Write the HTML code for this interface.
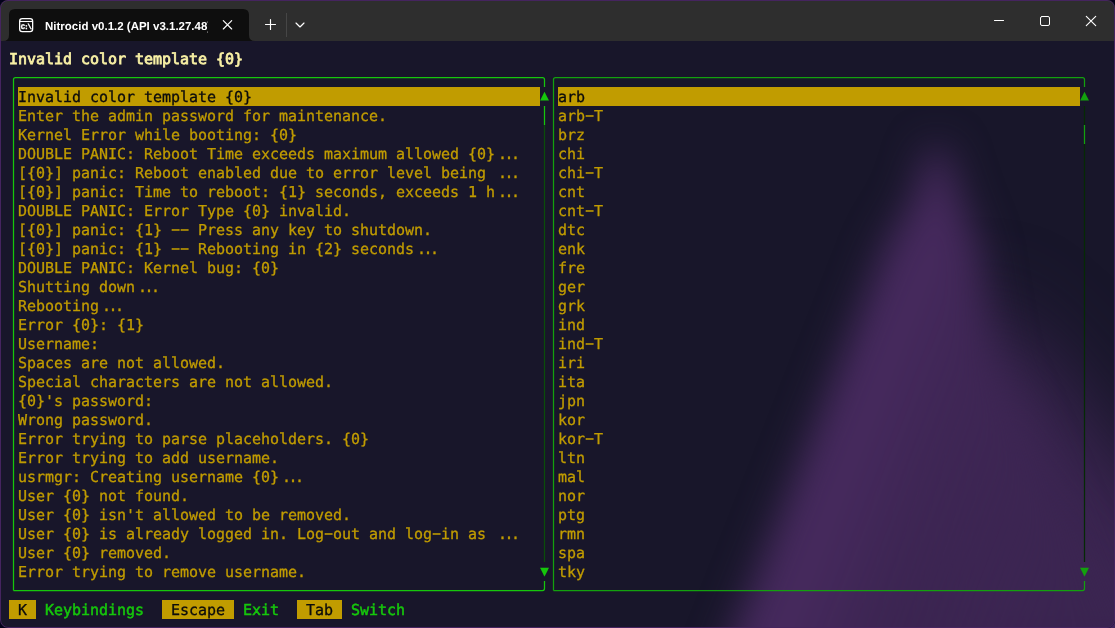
<!DOCTYPE html>
<html lang="en">
<head>
<meta charset="utf-8">
<title>Nitrocid v0.1.2 (API v3.1.27.48)</title>
<style>
html,body{margin:0;padding:0;background:#03011a;}
body{background:radial-gradient(circle at 100% 100%,#43285f 0,#43285f 24px,#03011a 25px);}
body{width:1115px;height:628px;overflow:hidden;position:relative;font-family:"DejaVu Sans Mono","Liberation Mono",monospace;letter-spacing:-0.03px;text-rendering:geometricPrecision;}
#win{position:absolute;left:0;top:0;width:1115px;height:628px;overflow:hidden;border-radius:8px;background:#18162a;}
#bg{position:absolute;left:0;top:40px;width:1115px;height:588px;}
#titlebar{position:absolute;left:0;top:0;width:1115px;height:41px;background:#2e2e2e;}
#tabtitle{will-change:transform;position:absolute;left:45px;top:19px;width:163.2px;height:16px;overflow:hidden;white-space:nowrap;font:bold 11.5px/16px "Liberation Sans",sans-serif;color:#fff;letter-spacing:0;text-rendering:geometricPrecision;}
#frame{position:absolute;left:0;top:0;width:1113px;height:626px;border:1px solid #45245f;border-radius:8px;pointer-events:none;}
.row{position:absolute;height:19px;line-height:21px;font-size:15px;white-space:pre;color:#c19c00;overflow:hidden;-webkit-text-stroke:0.3px currentColor;}
.el{letter-spacing:-2.53px;margin-left:3px;}
.hy{display:inline-block;transform:translateY(-1px) scaleX(1.9);}
.ar{position:absolute;width:10px;height:19px;font-size:15px;overflow:hidden;white-space:pre;}
.sel{background:#c19c00;color:#0c0c0c;}
.t{position:absolute;height:19px;line-height:21px;font-size:15px;white-space:pre;overflow:hidden;-webkit-text-stroke:0.3px currentColor;}
</style>
</head>
<body>
<div id="win">
<svg id="bg" width="1115" height="588" viewBox="0 40 1115 588" style="position:absolute;left:0;top:40px">
<defs>
<filter id="bl" color-interpolation-filters="sRGB" x="-50%" y="-50%" width="200%" height="200%"><feGaussianBlur stdDeviation="19"/></filter>
<filter id="bl2" color-interpolation-filters="sRGB" x="-50%" y="-50%" width="200%" height="200%"><feGaussianBlur stdDeviation="42"/></filter>
<linearGradient id="bg1" gradientUnits="userSpaceOnUse" x1="840" y1="360" x2="1120" y2="469">
<stop offset="0" stop-color="#472a5f"/><stop offset="0.2" stop-color="#45295c"/><stop offset="0.6" stop-color="#3e2654" stop-opacity="0.8"/><stop offset="1" stop-color="#3b2551" stop-opacity="0.5"/>
</linearGradient>
</defs>
<rect x="0" y="40" width="1115" height="588" fill="#18162a"/>
<polygon points="975,300 1055,370 1120,460 1400,700 900,700 930,420" fill="#3b2551" filter="url(#bl2)"/>
<polygon points="930,146 913,200 886,245 707,700 1150,700 1045,460 1000,360 987,290 980,245 961,200 944,146" fill="url(#bg1)" filter="url(#bl)"/>
</svg>
<div id="titlebar">
<svg width="1115" height="41" style="position:absolute;left:0;top:0;will-change:transform" fill="none">
<path fill="#0e0e0e" d="M1 41 H3 Q9 41 9 35 V15 Q9 9 15 9 H243 Q249 9 249 15 V35 Q249 41 255 41 Z"/>
<g stroke="#fff" stroke-width="1.3">
<rect x="19.65" y="18.55" width="13" height="13.1" rx="2.6"/>
<path d="M19.6 21.5 H32.6" stroke-width="1.1"/>
</g>
<g stroke="#fff" stroke-width="1.15" stroke-linecap="round">
<path d="M223.3 20.6 L231.7 29 M231.7 20.6 L223.3 29"/>
<path d="M265.5 24.5 H275.5 M270.5 19.5 V29.5"/>
<path d="M296 23 L300 27 L304 23" stroke-linejoin="round"/>
<path d="M994.5 20.5 H1003.5"/>
<rect x="1040.5" y="16.5" width="9" height="9" rx="1.5" stroke-width="1"/>
<path d="M1086.3 16.3 L1095.7 25.7 M1095.7 16.3 L1086.3 25.7"/>
</g>
<path stroke="#464646" stroke-width="1" d="M286.5 13 V37"/>
<text x="20.8 24.3 27.5" y="29" fill="#fff" stroke="#fff" stroke-width="0.35" font-family="Liberation Mono, monospace" font-weight="bold" font-size="7.2px" style="text-rendering:geometricPrecision">C:\</text>
</svg>
<div id="tabtitle">Nitrocid v0.1.2 (API v3.1.27.48)</div>
</div>
<div id="txt" style="position:absolute;left:0;top:0;width:1115px;height:628px;will-change:transform">
<div class="t" style="left:9px;top:49px;color:#f9f1a5;-webkit-text-stroke:0.75px #f9f1a5">Invalid color template {0}</div>
<svg id="boxes" width="1115" height="628" style="position:absolute;left:0;top:0" fill="none" stroke-width="1.25">
<path stroke="#16c60c" d="M13.5 590.5 V79.5 Q13.5 77.5 15.5 77.5 H542.5 Q544.5 77.5 544.5 79.5 V87 M544.5 106 V125 M544.5 581 V588.5 Q544.5 590.5 542.5 590.5 H13.5"/>
<path stroke="#0a4d0a" d="M544.5 125 V562"/>
<path stroke="#13a10e" d="M553.5 590.5 V79.5 Q553.5 77.5 555.5 77.5 H1082.5 Q1084.5 77.5 1084.5 79.5 V87 M1084.5 125 V144 M1084.5 581 V588.5 Q1084.5 590.5 1082.5 590.5 H553.5"/>
<path stroke="#052a05" d="M1084.5 106 V125 M1084.5 144 V562"/>
</svg>
<div class="ar" style="left:540px;top:87px;color:#16c60c;line-height:17px">▲</div>
<div class="ar" style="left:540px;top:562px;color:#16c60c;line-height:18px">▼</div>
<div class="ar" style="left:1080px;top:87px;color:#13a10e;line-height:17px">▲</div>
<div class="ar" style="left:1080px;top:562px;color:#13a10e;line-height:18px">▼</div>
<div class="row sel" style="left:18px;top:87px;width:522px">Invalid color template {0}</div>
<div class="row" style="left:18px;top:106px;width:522px">Enter the admin password for maintenance.</div>
<div class="row" style="left:18px;top:125px;width:522px">Kernel Error while booting: {0}</div>
<div class="row" style="left:18px;top:144px;width:522px">DOUBLE PANIC: Reboot Time exceeds maximum allowed {0}<span class="el">...</span></div>
<div class="row" style="left:18px;top:163px;width:522px">[{0}] panic: Reboot enabled due to error level being <span class="el">...</span></div>
<div class="row" style="left:18px;top:182px;width:522px">[{0}] panic: Time to reboot: {1} seconds, exceeds 1 h<span class="el">...</span></div>
<div class="row" style="left:18px;top:201px;width:522px">DOUBLE PANIC: Error Type {0} invalid.</div>
<div class="row" style="left:18px;top:220px;width:522px">[{0}] panic: {1} <span class="hy">-</span><span class="hy">-</span> Press any key to shutdown.</div>
<div class="row" style="left:18px;top:239px;width:522px">[{0}] panic: {1} <span class="hy">-</span><span class="hy">-</span> Rebooting in {2} seconds<span class="el">...</span></div>
<div class="row" style="left:18px;top:258px;width:522px">DOUBLE PANIC: Kernel bug: {0}</div>
<div class="row" style="left:18px;top:277px;width:522px">Shutting down<span class="el">...</span></div>
<div class="row" style="left:18px;top:296px;width:522px">Rebooting<span class="el">...</span></div>
<div class="row" style="left:18px;top:315px;width:522px">Error {0}: {1}</div>
<div class="row" style="left:18px;top:334px;width:522px">Username:</div>
<div class="row" style="left:18px;top:353px;width:522px">Spaces are not allowed.</div>
<div class="row" style="left:18px;top:372px;width:522px">Special characters are not allowed.</div>
<div class="row" style="left:18px;top:391px;width:522px">{0}'s password:</div>
<div class="row" style="left:18px;top:410px;width:522px">Wrong password.</div>
<div class="row" style="left:18px;top:429px;width:522px">Error trying to parse placeholders. {0}</div>
<div class="row" style="left:18px;top:448px;width:522px">Error trying to add username.</div>
<div class="row" style="left:18px;top:467px;width:522px">usrmgr: Creating username {0}<span class="el">...</span></div>
<div class="row" style="left:18px;top:486px;width:522px">User {0} not found.</div>
<div class="row" style="left:18px;top:505px;width:522px">User {0} isn't allowed to be removed.</div>
<div class="row" style="left:18px;top:524px;width:522px">User {0} is already logged in. Log<span class="hy">-</span>out and log<span class="hy">-</span>in as <span class="el">...</span></div>
<div class="row" style="left:18px;top:543px;width:522px">User {0} removed.</div>
<div class="row" style="left:18px;top:562px;width:522px">Error trying to remove username.</div>
<div class="row sel" style="left:558px;top:87px;width:522px">arb</div>
<div class="row" style="left:558px;top:106px;width:522px">arb<span class="hy">-</span>T</div>
<div class="row" style="left:558px;top:125px;width:522px">brz</div>
<div class="row" style="left:558px;top:144px;width:522px">chi</div>
<div class="row" style="left:558px;top:163px;width:522px">chi<span class="hy">-</span>T</div>
<div class="row" style="left:558px;top:182px;width:522px">cnt</div>
<div class="row" style="left:558px;top:201px;width:522px">cnt<span class="hy">-</span>T</div>
<div class="row" style="left:558px;top:220px;width:522px">dtc</div>
<div class="row" style="left:558px;top:239px;width:522px">enk</div>
<div class="row" style="left:558px;top:258px;width:522px">fre</div>
<div class="row" style="left:558px;top:277px;width:522px">ger</div>
<div class="row" style="left:558px;top:296px;width:522px">grk</div>
<div class="row" style="left:558px;top:315px;width:522px">ind</div>
<div class="row" style="left:558px;top:334px;width:522px">ind<span class="hy">-</span>T</div>
<div class="row" style="left:558px;top:353px;width:522px">iri</div>
<div class="row" style="left:558px;top:372px;width:522px">ita</div>
<div class="row" style="left:558px;top:391px;width:522px">jpn</div>
<div class="row" style="left:558px;top:410px;width:522px">kor</div>
<div class="row" style="left:558px;top:429px;width:522px">kor<span class="hy">-</span>T</div>
<div class="row" style="left:558px;top:448px;width:522px">ltn</div>
<div class="row" style="left:558px;top:467px;width:522px">mal</div>
<div class="row" style="left:558px;top:486px;width:522px">nor</div>
<div class="row" style="left:558px;top:505px;width:522px">ptg</div>
<div class="row" style="left:558px;top:524px;width:522px">rmn</div>
<div class="row" style="left:558px;top:543px;width:522px">spa</div>
<div class="row" style="left:558px;top:562px;width:522px">tky</div>
<div class="t" style="left:9px;top:600px;width:27px;background:#c19c00;color:#0c0c0c"> K </div>
<div class="t" style="left:45px;top:600px;color:#16c60c;-webkit-text-stroke-width:0.5px">Keybindings</div>
<div class="t" style="left:162px;top:600px;width:72px;background:#c19c00;color:#0c0c0c"> Escape </div>
<div class="t" style="left:243px;top:600px;color:#16c60c;-webkit-text-stroke-width:0.5px">Exit</div>
<div class="t" style="left:297px;top:600px;width:45px;background:#c19c00;color:#0c0c0c"> Tab </div>
<div class="t" style="left:351px;top:600px;color:#16c60c;-webkit-text-stroke-width:0.5px">Switch</div>
</div>
<div id="frame"></div>
</div>
</body>
</html>
